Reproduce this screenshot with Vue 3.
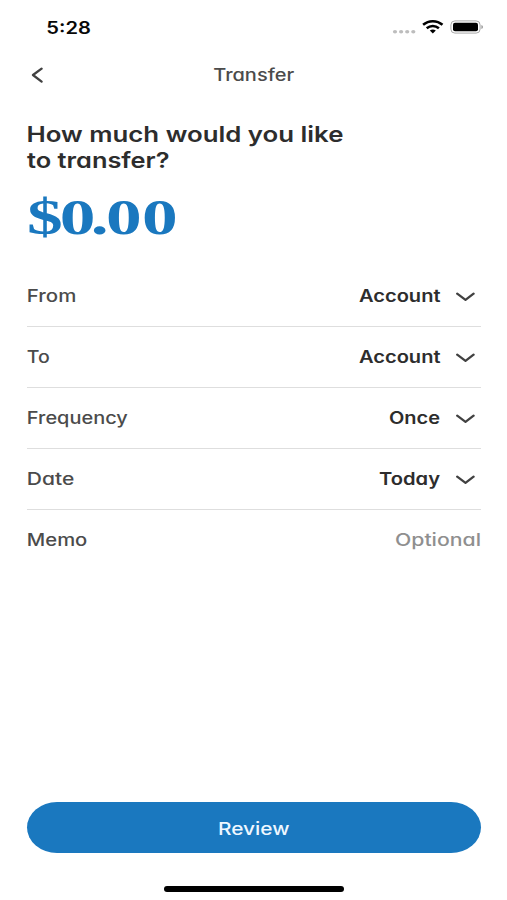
<script setup>
// Each label is drawn in an expanded width, so it carries the length it fills.
const rows = [
  { label: 'From', labelWidth: 49.5, value: 'Account', valueWidth: 81.5 },
  { label: 'To', labelWidth: 23, value: 'Account', valueWidth: 81.5 },
  { label: 'Frequency', labelWidth: 101, value: 'Once', valueWidth: 51 },
  { label: 'Date', labelWidth: 47.5, value: 'Today', valueWidth: 61 },
  { label: 'Memo', labelWidth: 60.5, value: 'Optional', valueWidth: 86, placeholder: true },
]
</script>

<template>
  <main class="screen">
    <header class="status">
      <svg class="text" width="45" height="24">
        <text class="time" x="-0.7" y="18.6" textLength="44.5" lengthAdjust="spacingAndGlyphs">5:28</text>
      </svg>
      <svg width="91" height="24" viewBox="0 0 91 24" aria-hidden="true">
        <g fill="#bdbdbd">
          <ellipse cx="3" cy="16.8" rx="2.1" ry="1.7" />
          <ellipse cx="9.1" cy="16.8" rx="2.1" ry="1.7" />
          <ellipse cx="15.2" cy="16.8" rx="2.1" ry="1.7" />
          <ellipse cx="21.3" cy="16.8" rx="2.1" ry="1.7" />
        </g>
        <g fill="none" stroke="#000" stroke-width="2.5">
          <path d="M31.1 9.8C36.7 4.9 44.9 4.9 50.5 9.8" />
          <path d="M34.7 13.2C38.3 10.1 43.3 10.1 46.9 13.2" />
        </g>
        <path d="M37.8 15.6Q40.8 13.6 43.8 15.6L40.8 18.4Z" />
        <rect x="58.9" y="5.9" width="29.2" height="12.2" rx="4" fill="#fff" stroke="#a9a9a9" stroke-width="1" />
        <rect x="61" y="7.7" width="25" height="8.6" rx="2" />
        <path d="M89.4 10Q91 10.6 91 12Q91 13.4 89.4 14Z" fill="#999" />
      </svg>
    </header>

    <nav class="nav">
      <svg class="back" width="12" height="18" viewBox="0 0 12 18" aria-hidden="true">
        <path d="M10.6 2.6L2 9L10.6 15.6" />
      </svg>
      <svg class="text" width="81" height="24">
        <text class="label" x="-0.8" y="18.3" textLength="81" lengthAdjust="spacingAndGlyphs">Transfer</text>
      </svg>
    </nav>

    <section class="intro">
      <svg class="text" width="454" height="60">
        <text class="heading" x="-0.5" y="23.6" textLength="317" lengthAdjust="spacingAndGlyphs">How much would you like</text>
        <text class="heading" x="0" y="49.8" textLength="142.5" lengthAdjust="spacingAndGlyphs">to transfer?</text>
      </svg>
      <svg class="text" width="454" height="60">
        <text class="amount" transform="scale(1.4 1)" x="0 23.4 45.6 56.4 82.1" y="56">$0.00</text>
      </svg>
    </section>

    <section class="rows">
      <div v-for="row in rows" :key="row.label" class="row">
        <svg class="text" :width="row.labelWidth" height="60">
          <text class="label" x="-0.2" y="35.5" :textLength="row.labelWidth" lengthAdjust="spacingAndGlyphs">{{ row.label }}</text>
        </svg>
        <div class="choice">
          <svg class="text" :width="row.valueWidth" height="60">
            <text
              :class="row.placeholder ? 'placeholder' : 'value'"
              x="0"
              y="35.5"
              :textLength="row.valueWidth"
              lengthAdjust="spacingAndGlyphs"
            >{{ row.value }}</text>
          </svg>
          <svg v-if="!row.placeholder" class="chevron" width="20" height="10" viewBox="0 0 20 10" aria-hidden="true">
            <path d="M2.2 1.6L10.5 7.8L18.6 1.6" />
          </svg>
        </div>
      </div>
    </section>

    <button class="review" type="button">
      <svg class="text" width="72" height="24">
        <text class="action" x="0" y="18.6" textLength="71.5" lengthAdjust="spacingAndGlyphs">Review</text>
      </svg>
    </button>
    <div class="home"></div>
  </main>
</template>

<style>
body {
  background: #fff;
}
</style>

<style scoped>
.screen {
  box-sizing: border-box;
  display: flex;
  flex-direction: column;
  width: 507px;
  height: 900px;
  padding: 15px 26px 8px 27px;
  overflow: hidden;
  background: #fff;
  font-family: Inter, "Liberation Sans", sans-serif;
}

svg {
  display: block;
  flex: none;
}

.text {
  overflow: visible;
  font-feature-settings: "cv11" 1;
}

.status {
  display: flex;
  justify-content: space-between;
  height: 24px;
  padding: 0 0 0 20px;
  margin-right: -2px;
}

.time {
  font-size: 17px;
  font-weight: 600;
  fill: #080808;
}

.nav {
  display: grid;
  grid-template-columns: 12px 1fr 12px;
  height: 24px;
  margin-top: 24px;
}

.nav .text {
  justify-self: center;
}

.back {
  margin: 3px 0 0 4px;
}

.back path,
.chevron path {
  fill: none;
  stroke: #414141;
  stroke-width: 2.3;
  stroke-linecap: round;
  stroke-linejoin: round;
}

.label {
  font-size: 17px;
  font-weight: 500;
  fill: #4b4b4b;
}

.intro {
  height: 148px;
  margin-top: 31px;
}

.heading {
  font-size: 21.6px;
  font-weight: 600;
  fill: #2d2d2d;
}

.amount {
  font-family: "Liberation Serif", serif;
  font-size: 51px;
  font-weight: 700;
  fill: #1a78bf;
}

.rows {
  display: flex;
  flex-direction: column;
}

.row {
  display: flex;
  justify-content: space-between;
  height: 60px;
  border-bottom: 1px solid #dedede;
}

.row:last-child {
  border-bottom: 0;
}

.choice {
  display: flex;
  align-items: center;
}

.chevron {
  margin: 1px 6px 0 15px;
}

.value {
  font-size: 17px;
  font-weight: 600;
  fill: #2d2d2d;
}

.placeholder {
  font-size: 17px;
  font-weight: 500;
  fill: #8f8f8f;
}

.review {
  display: flex;
  align-items: center;
  justify-content: center;
  height: 51px;
  margin-top: auto;
  padding: 0;
  border: 0;
  border-radius: 30px / 25.5px;
  background: #1a78bf;
  font-family: inherit;
}

.action {
  font-size: 17px;
  font-weight: 500;
  fill: #eef7ff;
}

.home {
  align-self: center;
  width: 180px;
  height: 6px;
  margin-top: 33px;
  border-radius: 3px;
  background: #000;
}
</style>
